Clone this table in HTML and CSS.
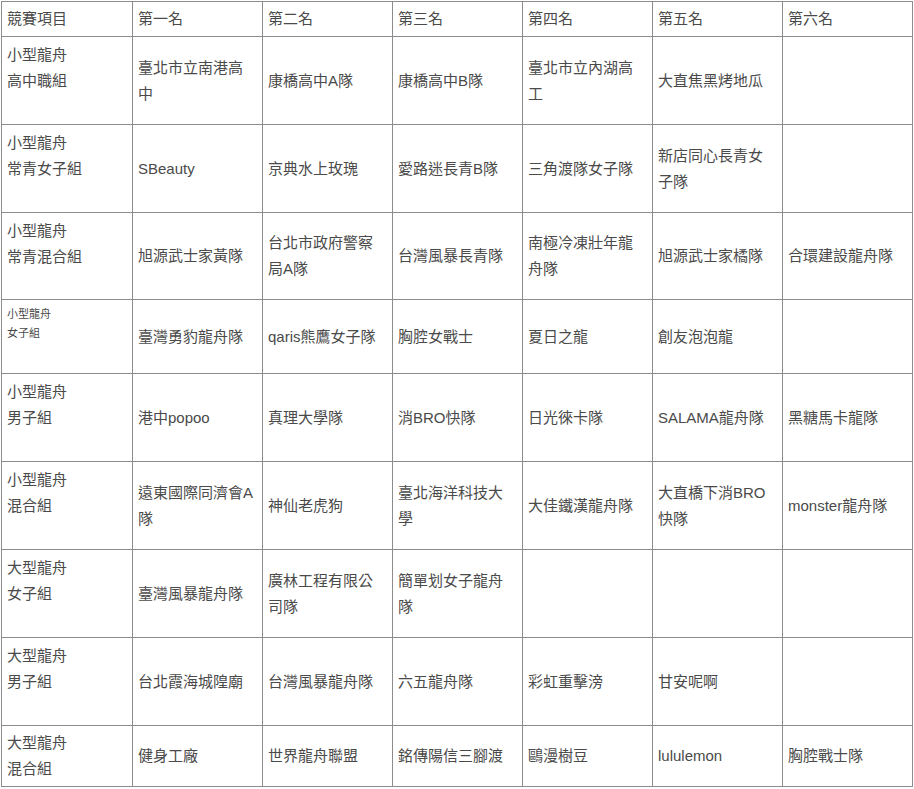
FILE: index.html
```html
<!DOCTYPE html>
<html lang="zh-Hant">
<head>
<meta charset="utf-8">
<title>競賽成績</title>
<link rel="stylesheet" href="styles.css">
</head>
<body>
<div class="wrap">
<table class="results">
<colgroup>
<col class="c-first"><col class="c"><col class="c"><col class="c"><col class="c"><col class="c"><col class="c">
</colgroup>
<tr class="r-head">
<td class="cat">競賽項目</td><td>第一名</td><td>第二名</td><td>第三名</td><td>第四名</td><td>第五名</td><td>第六名</td>
</tr>
<tr class="r-tall">
<td class="cat">小型龍舟<br>高中職組</td><td>臺北市立南港高中</td><td>康橋高中A隊</td><td>康橋高中B隊</td><td>臺北市立內湖高工</td><td>大直焦黑烤地瓜</td><td></td>
</tr>
<tr class="r-tall">
<td class="cat">小型龍舟<br>常青女子組</td><td>SBeauty</td><td>京典水上玫瑰</td><td>愛路迷長青B隊</td><td>三角渡隊女子隊</td><td>新店同心長青女子隊</td><td></td>
</tr>
<tr class="r-tall2">
<td class="cat">小型龍舟<br>常青混合組</td><td>旭源武士家黃隊</td><td>台北市政府警察局A隊</td><td>台灣風暴長青隊</td><td>南極冷凍壯年龍舟隊</td><td>旭源武士家橘隊</td><td>合環建設龍舟隊</td>
</tr>
<tr class="r-mid">
<td class="cat small">小型龍舟<br>女子組</td><td>臺灣勇豹龍舟隊</td><td>qaris熊鷹女子隊</td><td>胸腔女戰士</td><td>夏日之龍</td><td>創友泡泡龍</td><td></td>
</tr>
<tr class="r-tall">
<td class="cat">小型龍舟<br>男子組</td><td>港中popoo</td><td>真理大學隊</td><td>消BRO快隊</td><td>日光徠卡隊</td><td>SALAMA龍舟隊</td><td>黑糖馬卡龍隊</td>
</tr>
<tr class="r-tall">
<td class="cat">小型龍舟<br>混合組</td><td>遠東國際同濟會A隊</td><td>神仙老虎狗</td><td>臺北海洋科技大學</td><td>大佳鐵漢龍舟隊</td><td>大直橋下消BRO快隊</td><td>monster龍舟隊</td>
</tr>
<tr class="r-tall">
<td class="cat">大型龍舟<br>女子組</td><td>臺灣風暴龍舟隊</td><td>廣林工程有限公司隊</td><td>簡單划女子龍舟隊</td><td></td><td></td><td></td>
</tr>
<tr class="r-tall">
<td class="cat">大型龍舟<br>男子組</td><td>台北霞海城隍廟</td><td>台灣風暴龍舟隊</td><td>六五龍舟隊</td><td>彩虹重擊滂</td><td>甘安呢啊</td><td></td>
</tr>
<tr class="r-last">
<td class="cat">大型龍舟<br>混合組</td><td>健身工廠</td><td>世界龍舟聯盟</td><td>銘傳陽信三腳渡</td><td>鷗漫樹豆</td><td>lululemon</td><td>胸腔戰士隊</td>
</tr>
</table>
</div>
</body>
</html>
```
FILE: styles.css
```css
html, body {
  margin: 0;
  padding: 0;
  background: #ffffff;
}
.wrap {
  padding: 1px 0 0 1px;
}
.results {
  border-collapse: collapse;
  table-layout: fixed;
  width: 912px;
  font-family: "Liberation Sans", "Noto Sans CJK TC", Arial, sans-serif;
  font-size: 15px;
  line-height: 26px;
  color: #4a4a4a;
}
.c-first { width: 131px; }
.c { width: 130px; }
.results td {
  border: 1px solid #8c8c8c;
  padding: 4px 5px;
  vertical-align: middle;
  word-break: break-all;
}
.results td.cat {
  vertical-align: top;
  padding-top: 5px;
}
.results td.small {
  font-size: 11px;
  line-height: 19px;
  padding-top: 5px;
}
.r-head { height: 35px; }
.r-tall { height: 88px; }
.r-tall2 { height: 87px; }
.r-mid { height: 74px; }
.r-last { height: 60px; }
.r-head td.cat { vertical-align: middle; padding-top: 4px; }
.r-last td.cat { vertical-align: middle; padding-top: 4px; }
```
